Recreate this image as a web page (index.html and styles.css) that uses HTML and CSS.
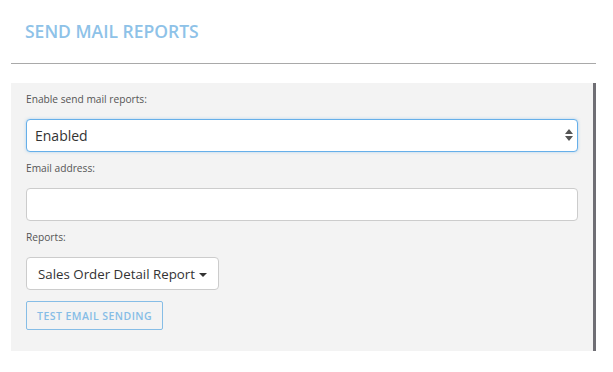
FILE: index.html
```html
<!DOCTYPE html>
<html lang="en">
<head>
    <meta charset="UTF-8">
    <title>Send Mail Reports</title>
    <link rel="stylesheet" href="styles.css">
</head>
<body>
    <div class="container">
        <h2 class="page-title">SEND MAIL REPORTS</h2>
        <div class="panel">
            <div class="form-row">
                <label for="enable-reports">Enable send mail reports:</label>
                <div class="select-wrap">
                    <select id="enable-reports" class="field field-focus">
                        <option>Enabled</option>
                        <option>Disabled</option>
                    </select>
                    <svg class="select-arrows" width="8" height="12" viewBox="0 0 8 12">
                        <path d="M4 0 L8 5 L0 5 Z M0 7 L8 7 L4 12 Z" fill="#555"/>
                    </svg>
                </div>
            </div>
            <div class="form-row">
                <label for="email">Email address:</label>
                <input type="text" id="email" class="field">
            </div>
            <div class="form-row">
                <label>Reports:</label>
                <button type="button" class="dropdown-btn">Sales Order Detail Report <span class="caret"></span></button>
            </div>
            <button type="button" class="test-btn">TEST EMAIL SENDING</button>
        </div>
    </div>
</body>
</html>
```

FILE: styles.css
```css
body {
    font-family: "Open Sans", Arial, sans-serif;
    margin: 0;
    background: #fff;
}
.container {
    width: 585px;
    margin-left: 11px;
}
.page-title {
    margin: 0;
    padding: 19px 0 0 14px;
    height: 44px;
    font-size: 17.5px;
    font-weight: 600;
    color: #8ec2e8;
    border-bottom: 1px solid #a9a9a9;
}
.panel {
    margin-top: 19px;
    background-color: #f3f3f3;
    border-right: 3px solid #6f6e74;
    padding: 8px 15px 21px;
}
.form-row label {
    display: block;
    font-size: 10.2px;
    line-height: 16px;
    color: #555;
    margin-bottom: 12px;
}
.form-row {
    margin-bottom: 8px;
}
.select-wrap {
    position: relative;
}
.field {
    display: block;
    width: 100%;
    height: 33px;
    box-sizing: border-box;
    border: 1px solid #ccc;
    border-radius: 4px;
    background: #fff;
    font-family: inherit;
    font-size: 14px;
    color: #333;
    padding: 0 8px;
    outline: none;
}
select.field {
    -webkit-appearance: none;
    appearance: none;
}
.field-focus {
    border-color: #66afe9;
    box-shadow: 0 0 3px rgba(102, 175, 233, 0.5);
}
.select-arrows {
    position: absolute;
    right: 5px;
    top: 10px;
}
.dropdown-btn {
    height: 33px;
    padding: 0 11px;
    border: 1px solid #ccc;
    border-radius: 4px;
    background: #fff;
    font-family: inherit;
    font-size: 13.3px;
    color: #333;
    margin-bottom: 3px;
}
.caret {
    display: inline-block;
    width: 0;
    height: 0;
    margin-left: 1px;
    vertical-align: middle;
    border-top: 4px solid #333;
    border-left: 4px solid transparent;
    border-right: 4px solid transparent;
}
.test-btn {
    display: block;
    height: 29px;
    padding: 0 10px;
    border: 1px solid #86bde6;
    border-radius: 2px;
    background: transparent;
    font-family: inherit;
    font-size: 10.5px;
    font-weight: 600;
    letter-spacing: 0.45px;
    color: #86bde6;
}
```
